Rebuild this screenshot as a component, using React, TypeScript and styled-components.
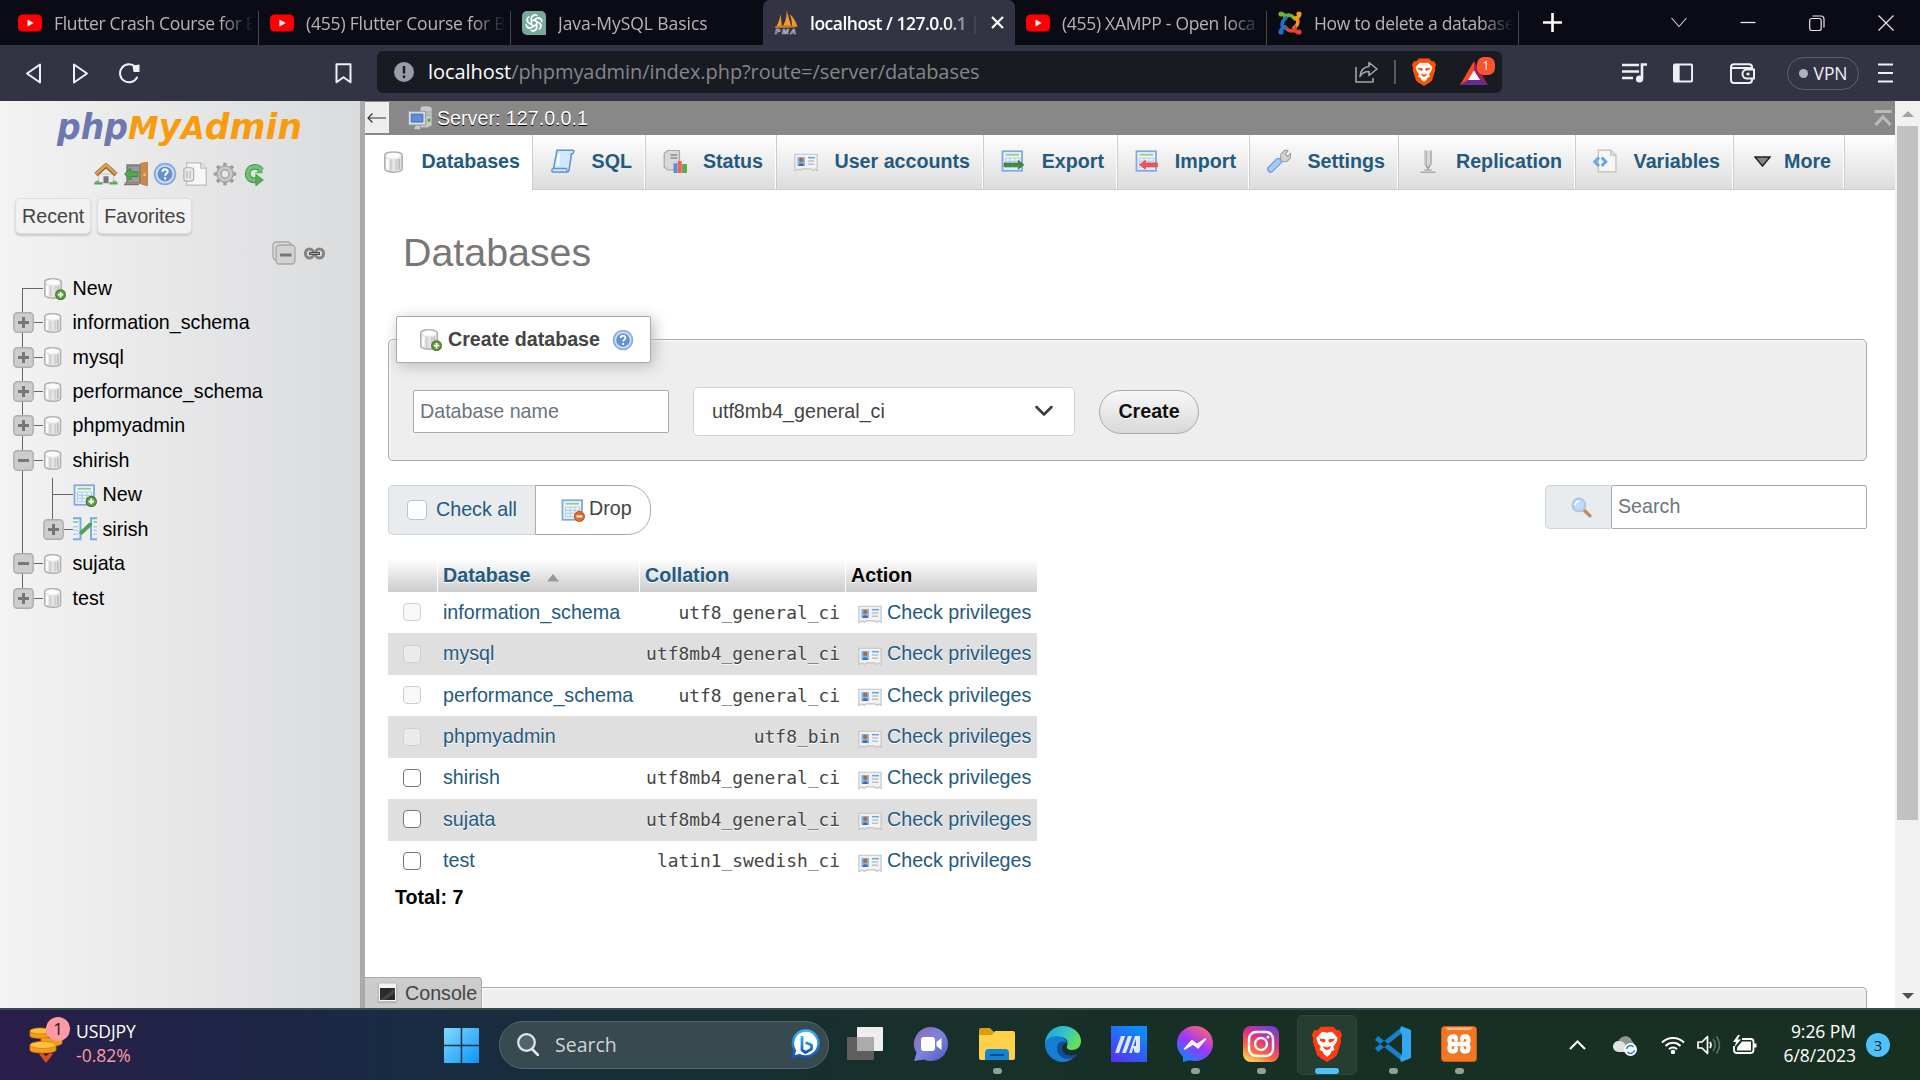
import React from "react";
import styled, { createGlobalStyle, css } from "styled-components";

const GlobalStyle = createGlobalStyle`
  *, *::before, *::after { box-sizing: border-box; }
  html, body { margin: 0; padding: 0; background: #fff; }
  body { font-family: "Liberation Sans", Arial, sans-serif; font-size: 19.68px; color: #444; overflow: hidden; }
  svg { display: block; flex: none; }
`;

const ui = css`
  font-family: "Open Sans", "Noto Sans", sans-serif;
`;

const Screen = styled.div`
  width: 1920px;
  height: 1080px;
  display: flex;
  flex-direction: column;
  overflow: hidden;
`;

/* ---------- browser chrome ---------- */

const TabStrip = styled.div`
  ${ui}
  height: 45px;
  flex: none;
  display: flex;
  padding-left: 7px;
  background: #0b0b15;
`;

const BrowserTab = styled.div<{ $active?: boolean; $line?: boolean }>`
  width: 252px;
  height: 45px;
  flex: none;
  display: flex;
  align-items: center;
  gap: 12px;
  padding: 0 5px 0 11px;
  background: ${(p) =>
    p.$active ? "#323443" : p.$line ? "linear-gradient(#45454c, #45454c) right bottom / 1px 34px no-repeat" : "none"};
  border-radius: ${(p) => (p.$active ? "7px 7px 0 0" : "0")};
`;

const TabTitle = styled.div<{ $active?: boolean; $ls?: number }>`
  flex: 1;
  overflow: hidden;
  white-space: nowrap;
  font-size: 17.5px;
  line-height: 28px;
  letter-spacing: ${(p) => p.$ls ?? -0.3}px;
  font-weight: ${(p) => (p.$active ? 600 : 400)};
  color: ${(p) => (p.$active ? "#fff" : "#b4b4b8")};
  mask-image: linear-gradient(to right, #000 calc(100% - 34px), transparent);
`;

const WindowButtons = styled.div`
  flex: 1;
  display: flex;
  align-items: center;
  justify-content: flex-end;
  padding-right: 26px;
  gap: 53px;
`;

const NewTab = styled.div`
  display: flex;
  align-items: center;
  padding-left: 24px;
`;

const Toolbar = styled.div`
  ${ui}
  height: 56px;
  flex: none;
  display: flex;
  align-items: center;
  background: #323443;
  padding-left: 25px;
`;

const NavGroup = styled.div`
  width: 310px;
  display: flex;
  align-items: center;
  gap: 30px;
`;

const Bookmark = styled.div`
  width: 42px;
`;

const UrlBar = styled.div`
  width: 1125px;
  height: 42px;
  margin-top: -2px;
  display: flex;
  align-items: center;
  padding: 0 6px 0 17px;
  background: #191b22;
  border-radius: 6px;
`;

const UrlText = styled.div`
  flex: 1;
  padding-left: 14px;
  font-size: 20px;
  line-height: 28px;
  letter-spacing: -0.07px;
  color: #85868a;
  white-space: nowrap;
  b { font-weight: 400; color: #fff; }
`;

const UrlActions = styled.div`
  display: flex;
  align-items: center;
`;

const Divider = styled.div`
  width: 2px;
  height: 24px;
  margin: 0 16px 0 16px;
  background: #585a60;
`;

const Rewards = styled.div`
  position: relative;
  margin-left: 24px;
  width: 36px;
  height: 30px;
  padding-top: 4px;
`;

const RewardsBadge = styled.span`
  position: absolute;
  left: 17px;
  top: 0;
  width: 18px;
  height: 18px;
  border-radius: 7px;
  background: #fb542b;
  color: #fff;
  font-size: 12px;
  line-height: 18px;
  text-align: center;
`;

const ToolbarRight = styled.div`
  flex: 1;
  display: flex;
  align-items: center;
  padding: 0 26px 0 120px;
`;

const Vpn = styled.div`
  width: 72px;
  height: 33px;
  margin: 0 19px 0 32px;
  display: flex;
  align-items: center;
  justify-content: center;
  gap: 6px;
  border: 1px solid #5d6078;
  border-radius: 17px;
  color: #f0f0f4;
  font-size: 17.5px;
  letter-spacing: -0.1px;
  &::before { content: ""; width: 9px; height: 9px; border-radius: 50%; background: #aeb1c2; }
`;

/* ---------- page ---------- */

const Page = styled.div`
  height: 907px;
  flex: none;
  display: flex;
  background: #fff;
`;

const Sidebar = styled.aside`
  width: 365px;
  border-right: 5px solid #aaa;
  background: linear-gradient(to right, #f3f3f3, #dadbdd);
  color: #000;
`;

const LogoRow = styled.div`
  padding: 5px 0 0 54px;
  height: 61px;
`;

const ShortcutRow = styled.div`
  display: flex;
  gap: 5.7px;
  height: 36px;
  padding-left: 94px;
`;

const NavButtons = styled.div`
  display: flex;
  gap: 6px;
  padding-left: 15px;
  height: 43px;
`;

const NavButton = styled.div`
  height: 36px;
  padding: 0 6px;
  line-height: 34px;
  border: 1px solid #ddd;
  border-radius: 5px;
  background: #f2f2f2;
  box-shadow: 0 2px 2px #ccc;
  color: #444;
`;

const TreeTools = styled.div`
  display: flex;
  align-items: center;
  gap: 8px;
  padding-left: 272px;
  height: 24px;
`;

const Tree = styled.div`
  padding: 6px 0 0 13px;
`;

const TreeRow = styled.div`
  height: 34.45px;
  display: flex;
  align-items: center;
  white-space: nowrap;
`;

const Gutter = styled.div<{ $top?: string; $bottom?: string }>`
  width: 30px;
  height: 34.45px;
  flex: none;
  display: flex;
  align-items: center;
  background:
    linear-gradient(#666, #666) 9px ${(p) => p.$top ?? "0"} / 1px ${(p) => p.$bottom ?? "100%"} no-repeat;
`;

const Dash = styled.span<{ $w: number }>`
  height: 1px;
  width: ${(p) => p.$w}px;
  margin-left: auto;
  background: #666;
`;

const NodeIcon = styled.span`
  width: 29.500px;
  flex: none;
`;

const Main = styled.main`
  width: 1530px;
  display: flex;
  flex-direction: column;
`;

const ServerBar = styled.div`
  height: 34px;
  flex: none;
  display: flex;
  align-items: center;
  background: #888;
  color: #fff;
  text-shadow: 0 1px 0 #000;
  padding-right: 3px;
`;

const BackBox = styled.div`
  width: 24px;
  height: 31px;
  margin: 1px 19px 0 0;
  display: flex;
  align-items: center;
  justify-content: center;
  align-self: flex-start;
  background: #eee;
`;

const ServerName = styled.div`
  flex: 1;
  padding: 0 0 1px 5px;
  line-height: 24px;
`;

const Menu = styled.nav`
  height: 55px;
  flex: none;
  display: flex;
  background: linear-gradient(#fff, #dcdcdc);
  border-bottom: 1px solid #ccc;
`;

const MenuTab = styled.div<{ $w: number; $active?: boolean; $pad?: number }>`
  width: ${(p) => p.$w}px;
  height: ${(p) => (p.$active ? 55 : 54)}px;
  flex: none;
  display: flex;
  align-items: center;
  justify-content: space-between;
  padding: 0 12px 2px ${(p) => p.$pad ?? 18}px;
  font-weight: 700;
  color: #235a81;
  white-space: nowrap;
  background: ${(p) => (p.$active ? "#fff" : "none")};
  border-right: 1px solid ${(p) => (p.$active ? "#ccc" : "#fff")};
  box-shadow: ${(p) => (p.$active ? "none" : "1px 0 0 #ccc")};
`;

const Content = styled.div`
  flex: 1;
  min-height: 0;
  padding: 0 28px 0 23px;
  display: flex;
  flex-direction: column;
`;

const Title = styled.h2`
  margin: 0;
  padding: 37px 0 0 15px;
  height: 126px;
  font-size: 39.36px;
  line-height: 50px;
  font-weight: 400;
  color: #777;
`;

const panel = css`
  border: 1px solid #aaa;
  background: #eee;
  box-shadow: 1px 1px 2px #fff inset;
`;

const CreateBox = styled.section`
  ${panel}
  flex: none;
  height: 122px;
  margin-top: 23px;
  border-radius: 5px;
`;

const Legend = styled.div`
  width: 255px;
  height: 47px;
  margin: -24px 0 0 7px;
  padding: 0 16px 0 22px;
  display: flex;
  align-items: center;
  font-weight: 700;
  color: #444;
  background: #fff;
  border: 1px solid #aaa;
  border-radius: 2px;
  box-shadow: 3px 3px 15px #bbb;
  span { padding: 0 0 1px 6px; flex: 1; }
`;

const CreateForm = styled.div`
  display: flex;
  align-items: center;
  padding: 24px 0 0 24px;
`;

const Field = styled.div<{ $h: number }>`
  width: 256px;
  height: ${(p) => p.$h}px;
  display: flex;
  align-items: center;
  padding: 0 6px 1px;
  border: 1px solid #aaa;
  border-radius: 2px;
  background: #fff;
  color: #6c757d;
`;

const Select = styled.div`
  width: 382px;
  height: 49px;
  margin: 0 24px;
  padding: 0 21px 1px 18px;
  display: flex;
  align-items: center;
  justify-content: space-between;
  border: 1px solid #ced4da;
  border-radius: 5px;
  background: #fff;
`;

const CreateButton = styled.div`
  width: 100px;
  height: 44px;
  line-height: 41px;
  text-align: center;
  font-weight: 700;
  color: #111;
  text-shadow: 0 1px 0 #fff;
  border: 1px solid #aaa;
  border-radius: 22px;
  background: linear-gradient(#f8f8f8, #d8d8d8);
`;

const ActionRow = styled.div`
  flex: none;
  display: flex;
  align-items: flex-start;
  height: 50px;
  margin-top: 24px;
`;

const CheckAll = styled.div`
  width: 147px;
  height: 50px;
  display: flex;
  align-items: center;
  gap: 9px;
  padding-left: 18px;
  border: 1px solid #ced4da;
  border-right: 0;
  border-radius: 5px 0 0 5px;
  background: #e9ecef;
  color: #235a81;
  label { padding-bottom: 2px; }
`;

const Check = styled.span<{ $size: number; $edge: string; $bg?: string }>`
  display: block;
  width: ${(p) => p.$size}px;
  height: ${(p) => p.$size}px;
  border: 1px solid ${(p) => p.$edge};
  border-radius: 4px;
  background: ${(p) => p.$bg ?? "#fff"};
`;

const DropButton = styled.div`
  width: 116px;
  height: 50px;
  display: flex;
  align-items: center;
  gap: 4px;
  padding: 0 0 3px 25px;
  border: 1px solid #aaa;
  border-radius: 0 23px 23px 0;
  background: #fff;
  color: #444;
  margin-right: auto;
  svg { margin-top: 3px; }
`;

const SearchAddon = styled.div`
  width: 66px;
  height: 44px;
  display: flex;
  align-items: center;
  justify-content: center;
  padding-left: 5px;
  border: 1px solid #ced4da;
  border-right: 0;
  border-radius: 5px 0 0 5px;
  background: #e9ecef;
`;

const Table = styled.div`
  flex: none;
  width: 649px;
  margin-top: 24px;
`;

const rowGrid = css`
  display: grid;
  grid-template-columns: 49px 201px 205px 191px;
  column-gap: 1px;
`;

const HeadRow = styled.div`
  ${rowGrid}
  height: 33px;
`;

const HeadCell = styled.div<{ $dark?: boolean }>`
  display: flex;
  align-items: center;
  gap: 17px;
  padding: 0 5px 1px;
  background: linear-gradient(#fff, #ccc);
  color: ${(p) => (p.$dark ? "#000" : "#235a81")};
  font-weight: 700;
  text-shadow: 0 1px 0 #fff;
`;

const Row = styled.div<{ $odd: boolean }>`
  ${rowGrid}
  height: 41.45px;
  align-items: center;
  padding-bottom: 1px;
  background: ${(p) => (p.$odd ? "#dfdfdf" : "#fff")};
  text-shadow: 0 1px 0 #fff;
  color: #235a81;
  white-space: nowrap;
`;

const CheckCell = styled.div`
  padding: 0 0 0 15px;
`;

const NameCell = styled.div`
  padding-left: 5px;
`;

const CollationCell = styled.div`
  padding-right: 5px;
  text-align: right;
  font-family: "DejaVu Sans Mono", monospace;
  font-size: 17.9px;
  color: #444;
`;

const ActionCell = styled.div`
  display: flex;
  align-items: center;
  gap: 5px;
  padding-left: 12px;
  svg { margin-top: 2px; }
`;

const Total = styled.div`
  padding: 3px 0 0 7px;
  line-height: 24px;
  font-weight: 700;
  color: #000;
  flex: 1;
`;

const ConsoleRow = styled.div`
  flex: none;
  display: flex;
  align-items: flex-end;
  height: 31px;
  margin-left: -23px;
`;

const ConsoleTab = styled.div`
  width: 117px;
  height: 31px;
  display: flex;
  align-items: center;
  gap: 7px;
  padding-left: 12px;
  border: 1px solid #aaa;
  border-width: 1px 1px 0 0;
  border-radius: 0 4px 0 0;
  background: #ccc;
`;

const ConsoleEdge = styled.div`
  ${panel}
  flex: 1;
  height: 21px;
  border-width: 1px 1px 0 0;
  border-radius: 0 5px 0 0;
`;

const Scrollbar = styled.div`
  width: 25px;
  display: flex;
  flex-direction: column;
  align-items: center;
  background: #f1f1f1;
  padding: 10px 0 9px;
`;

const Thumb = styled.div`
  width: 21px;
  height: 694px;
  margin: 9px 0 auto;
  background: #c1c1c1;
`;

/* ---------- taskbar ---------- */

const Taskbar = styled.div`
  ${ui}
  height: 72px;
  flex: none;
  display: flex;
  align-items: center;
  border-top: 2px solid #3a4a4c;
  background: linear-gradient(to right, #2a1e4a 0, #202346 190px, #182b43 400px, #162f36 620px, #17302b 900px, #173024 1250px, #173022 1920px);
  color: #fff;
`;

const Widget = styled.div`
  position: relative;
  width: 444px;
  height: 70px;
  display: flex;
  align-items: center;
  padding: 0 0 0 29px;
  gap: 13px;
`;

const WidgetBadge = styled.span`
  position: absolute;
  left: 46px;
  top: 7px;
  width: 24px;
  height: 24px;
  border-radius: 50%;
  background: #ff99a4;
  color: #1b1b1b;
  font-size: 17px;
  line-height: 23px;
  text-align: center;
`;

const WidgetText = styled.div`
  font-size: 17.5px;
  line-height: 24px;
  letter-spacing: -0.05px;
  padding-bottom: 4px;
  span { display: block; color: #ff99a4; letter-spacing: 0; }
`;

const SearchPill = styled.div`
  width: 330px;
  height: 48px;
  margin: 0 0 0 20px;
  padding: 0 8px 2px 17px;
  display: flex;
  align-items: center;
  border-radius: 24px;
  border: 1px solid #53666a;
  background: #364a4f;
  font-size: 19.5px;
  color: #d0d5d6;
  span { flex: 1; padding-left: 16px; letter-spacing: 0; }
`;

const Apps = styled.div`
  display: flex;
  margin-left: 6px;
  gap: 6px;
`;

const AppSlot = styled.div<{ $state?: "open" | "active" }>`
  width: 60px;
  height: 60px;
  display: flex;
  flex-direction: column;
  align-items: center;
  padding-top: ${(p) => (p.$state === "active" ? 10 : 11)}px;
  border-radius: 6px;
  background: ${(p) => (p.$state === "active" ? "#263d31" : "none")};
  border: ${(p) => (p.$state === "active" ? "1px solid #30463a" : "0")};
  &::after {
    content: "";
    display: ${(p) => (p.$state ? "block" : "none")};
    margin-top: 6px;
    width: ${(p) => (p.$state === "active" ? 24 : 9)}px;
    height: 6px;
    border-radius: 3px;
    background: ${(p) => (p.$state === "active" ? "#4cc2ff" : "#939f99")};
  }
`;

const Tray = styled.div`
  flex: 1;
  display: flex;
  align-items: center;
  justify-content: flex-end;
  padding-right: 30px;
`;

const TrayIcons = styled.div`
  display: flex;
  align-items: center;
  gap: 12px;
`;

const Clock = styled.div`
  width: 99px;
  text-align: right;
  font-size: 17.5px;
  line-height: 24px;
  letter-spacing: -0.05px;
  padding-bottom: 4px;
  white-space: nowrap;
`;

const Notice = styled.div`
  width: 24px;
  height: 24px;
  margin-left: 10px;
  border-radius: 50%;
  background: #4cc2ff;
  color: #10222c;
  font-size: 15px;
  line-height: 24px;
  text-align: center;
`;

/* ---------- icons ---------- */

type P = { s?: number; w?: number; h?: number };

const YouTube = () => (
  <svg width="24" height="24" viewBox="0 0 24 24">
    <rect x="0" y="3.5" width="24" height="17" rx="4.5" fill="#f00" />
    <path d="M9.5 8.5v7l6.2-3.5z" fill="#fff" />
  </svg>
);
const ChatGpt = () => (
  <svg width="24" height="24" viewBox="0 0 24 24">
    <path d="M5 0h14a5 5 0 0 1 5 5v19H5a5 5 0 0 1-5-5V5a5 5 0 0 1 5-5z" fill="#75a99c" />
    <g fill="none" stroke="#fff" strokeWidth="1.4" strokeLinejoin="round">
      {[0, 60, 120, 180, 240, 300].map((a) => (
        <path key={a} transform={`rotate(${a} 12 12)`} d="M9.4 13.5V7.2A3.3 3.3 0 0 1 15.2 5M9.4 10.5l4.8-2.8a3.3 3.3 0 0 1 4.5 1.2" />
      ))}
    </g>
  </svg>
);
const PmaFav = () => (
  <svg width="24" height="26" viewBox="0 0 24 26">
    <path d="M2 17C5 12 6 8 6.500 4L8 17zM8.500 17C12 11 13 5 12.500 0l5 17zM18 16c0-5-1-9-2.500-12 4 3 6 7 8 13z" fill="#f39a2d" />
    <path d="M1 16.500c7-1.500 14-1.500 21-.5l-1 1.500-20 .5z" fill="#c77a25" />
    <text x="1" y="23.500" fontSize="8" fontWeight="700" fontStyle="italic" fontFamily="Liberation Sans" textLength="21" fill="#3f4170" stroke="#c9cbe6" strokeWidth=".5">PMA</text>
  </svg>
);
const Joomla = () => (
  <svg width="24" height="24" viewBox="0 0 24 24" fill="none" strokeWidth="3.600" strokeLinecap="round">
    <path d="M3 3c3.500-.5 3.500 1 4 3 1.500-2.500 6-2.500 8 0l2 2" stroke="#6bb42b" />
    <path d="M21 3c.5 3.500-1 3.500-3 4 2.500 1.500 2.500 6 0 8l-2 2" stroke="#f39a21" />
    <path d="M21 21c-3.500.5-3.500-1-4-3-1.500 2.500-6 2.500-8 0l-2-2" stroke="#e8412c" />
    <path d="M3 21c-.5-3.500 1-3.500 3-4-2.500-1.500-2.500-6 0-8l2-2" stroke="#1c72c4" />
    <circle cx="3" cy="3" r="1.600" stroke="#6bb42b" strokeWidth="2" /><circle cx="21" cy="3" r="1.600" stroke="#f39a21" strokeWidth="2" />
    <circle cx="21" cy="21" r="1.600" stroke="#e8412c" strokeWidth="2" /><circle cx="3" cy="21" r="1.600" stroke="#1c72c4" strokeWidth="2" />
  </svg>
);

const BraveLion = ({ s = 28, w = 24, c = "#ff5000" }: P & { c?: string }) => (
  <svg width={w} height={s} viewBox="0 0 24 28" preserveAspectRatio="none">
    <path d="M7 .5h10l3 3 2-.5L24 7l-1 3 .3 2-3.300 10.500L17 25l-5 3-5-3-3-2.500L.7 12 1 10 0 7l2-4 2 .5z" fill={c} />
    <path d="M8 4.500l4 .8 4-.8 4.500 4.800-1.200 4-2.300 2.700 1 2.500-2.500 1.200-1 2.300-2.500 2-2.500-2-1-2.300L6 18.500l1-2.500-2.300-2.700-1.200-4z" fill="#fff" />
    <path d="M6 9.700l4.500.6.500 1.400-1.500 1.300-3-1.500zM18 9.700l-4.500.6-.5 1.400 1.500 1.300 3-1.500zM8.500 15.500l3.500 1.300 3.500-1.300-1.700 2.500-1.800.7-1.800-.7z" fill={c} />
  </svg>
);

const Ico = ({ children, s = 24 }: { children: React.ReactNode; s?: number }) => (
  <svg width={s} height={s} viewBox="0 0 16 16">{children}</svg>
);

const Cylinder = () => (
  <>
    <path d="M1.200 3.500c0-3 11.600-3 11.600 0v9c0 3-11.600 3-11.600 0z" fill="#e4e4e4" stroke="#b0b0b0" strokeWidth="1" />
    <path d="M3 6v7" stroke="#fff" strokeWidth="1.600" /><path d="M5.300 6.300v7.200M9 6.300v7.200" stroke="#cfcfcf" strokeWidth="1.400" />
    <path d="M10.800 6v7" stroke="#bdbdbd" strokeWidth="1.200" />
    <ellipse cx="7" cy="3.700" rx="4.900" ry="1.900" fill="#fbfbfb" />
  </>
);
const PlusDot = () => (
  <>
    <circle cx="12.200" cy="12.300" r="3.400" fill="#5d9c3c" stroke="#41782a" strokeWidth=".7" />
    <path d="M12.200 10.400v3.800M10.300 12.300h3.800" stroke="#fff" strokeWidth="1.300" />
  </>
);
const Db = ({ s = 22 }: P) => <Ico s={s}><Cylinder /></Ico>;
const DbNew = ({ s = 23 }: P) => <Ico s={s}><Cylinder /><PlusDot /></Ico>;
const Sheet = () => (
  <>
    <rect x="1" y="1.500" width="13" height="13" fill="#eef5fd" stroke="#7fa8de" strokeWidth="1.200" />
    <path d="M3 3.800h9" stroke="#8fcf7c" strokeWidth="1.200" />
    <path d="M3 6h9.500v6.500H3zM3 8.200h9.500M3 10.300h9.500M6 6v6.500M9.200 6v6.500" fill="none" stroke="#b3cdeb" strokeWidth=".8" />
  </>
);
const TableNew = () => <Ico><Sheet /><PlusDot /></Ico>;
const TableDrop = () => (
  <Ico><Sheet /><circle cx="12.300" cy="12.300" r="3.400" fill="#e7692b" stroke="#c14a12" strokeWidth=".6" /><path d="M10.400 12.300h3.800" stroke="#fff" strokeWidth="1.300" /></Ico>
);
const ExportIcon = () => (
  <Ico><Sheet /><path d="M2 9.300h9.500V7.500l3.800 3-3.800 3v-1.700H2z" fill="#3f8f38" stroke="#2c6b2c" strokeWidth=".4" /></Ico>
);
const ImportIcon = () => (
  <Ico><Sheet /><path d="M15 9.300H7V7.500l-4 3 4 3v-1.700h8z" fill="#f0555c" stroke="#d33" strokeWidth=".4" /></Ico>
);
const TableRel = () => (
  <Ico>
    <path d="M0 .8h5v14H0M16 .8h-4v14h4" fill="#e9f2fc" stroke="#7fa8de" strokeWidth="1.300" />
    <path d="M0 3.300h3.500M13.500 3.300H16" stroke="#8fcf7c" strokeWidth="1.200" />
    <path d="M0 6.500h3.500M0 9h3.500M0 11.500h3.500M13.500 6.500H16M13.500 9H16M13.500 11.500H16" stroke="#b3cdeb" strokeWidth=".9" />
    <path d="M5.500 10.500l6-5.500" stroke="#51a351" strokeWidth="2.600" strokeLinecap="round" />
  </Ico>
);
const SqlIcon = () => (
  <Ico>
    <path d="M4 .8h10.500c1.200 0 1.200 2.400-.8 2.400L12 14.200c-.3 1.200-1 1.200-1.500 1.200H1.500c-1.300 0-1.300-2.400.2-2.400z" fill="#d2e7fb" stroke="#5f93cf" strokeWidth="1" />
    <path d="M13 3.200h1.500M1.700 13h8.500c.5 0 .5 1.800.4 2.400" fill="none" stroke="#5f93cf" strokeWidth=".9" />
    <path d="M5.500 3l-1.200 8" stroke="#fff" strokeWidth="1.500" />
  </Ico>
);
const StatusIcon = () => (
  <Ico>
    <path d="M3 1h8v13H3L.8 12V3z" fill="#d9d9d9" stroke="#a6a6a6" strokeWidth=".8" />
    <path d="M5 4h4.500M5 6h4.500" stroke="#8d8d8d" strokeWidth=".9" />
    <path d="M7 9.500h2.600V16H7z" fill="#5a8de0" /><path d="M9.800 8h2.700v8H9.800z" fill="#f0605a" /><path d="M12.700 10H16v6h-3.300z" fill="#5aad4c" />
  </Ico>
);
const Privileges = () => (
  <Ico>
    <path d="M.6 3.500h14.800v10.800l-1.500-1-1.500 1-1-1h-6l-1.200 1-1.400-1-2.200 1z" fill="#f2f2f2" stroke="#c4c4c4" strokeWidth=".8" />
    <rect x="2.300" y="5.300" width="5" height="6" fill="#7db4ee" />
    <circle cx="4.800" cy="7.300" r="1.400" fill="#b06a2c" /><path d="M3 11.300c0-2.500 3.600-2.500 3.600 0z" fill="#3f6dab" />
    <path d="M9.300 5.800H14" stroke="#67a3e0" /><path d="M9.300 8h4.200M9.300 10.200h4.200" stroke="#b9c2cc" />
  </Ico>
);
const Wrench = () => (
  <Ico>
    <path d="M9 7.500l.3-4L12 .8l2 .2-1.700 2.600 1.500 1.300L15.700 3v3l-2.500 2.400-3 .3z" fill="#d2d2d2" stroke="#999" strokeWidth=".7" />
    <path d="M2.500 13.400L7.500 8.300" stroke="#6f9ce2" strokeWidth="4.800" strokeLinecap="round" />
    <path d="M2.500 13.400L7.500 8.300" stroke="#a8c8f4" strokeWidth="3.200" strokeLinecap="round" />
  </Ico>
);
const Replication = () => (
  <Ico>
    <path d="M6.500 1v9.500M9.500 1v9.500" stroke="#b3b3b3" strokeWidth="2.200" /><path d="M6 1v9M9 1v9" stroke="#ddd" strokeWidth=".7" />
    <path d="M6.500 10.500L8 13l1.500-2.500" stroke="#999" fill="none" /><path d="M3 15.500h10M5.500 14h5" stroke="#aaa" strokeWidth="1.100" />
  </Ico>
);
const Variables = () => (
  <Ico>
    <path d="M3.500.8h8.300l3.500 3.400v11H3.500z" fill="#f6f6f6" stroke="#bdbdbd" strokeWidth=".8" />
    <path d="M11.800.8v3.400h3.500" fill="#e2e2e2" stroke="#bdbdbd" strokeWidth=".7" />
    <path d="M4 5.700L1.300 8.500 4 11.300M5.800 5.700l2.700 2.800-2.700 2.800" fill="none" stroke="#65a5ea" strokeWidth="2" />
  </Ico>
);
const ServerIcon = () => (
  <Ico>
    <path d="M9 0h5l2 1v12l-3 1.500H8V2z" fill="#c9c9c9" stroke="#8a8a8a" strokeWidth=".5" />
    <path d="M12 4h3M12 6h3" stroke="#999" strokeWidth=".6" /><path d="M13 8.500h2v2h-2z" fill="#4fae4f" />
    <path d="M.3 3.500h11.500v9.200H.3z" fill="#d7dade" stroke="#8e9297" strokeWidth=".6" /><path d="M2.200 5.400h7.700v5.300H2.200z" fill="#5c8fd8" stroke="#3d6cb3" strokeWidth=".6" />
    <path d="M4 15.500h4.500L7.500 13h-2.500z" fill="#c7c7c7" />
  </Ico>
);
const Help = ({ s = 22 }: P) => (
  <Ico s={s}>
    <circle cx="8" cy="8" r="7" fill="#a9c4e8" stroke="#86aadb" strokeWidth="1" />
    <circle cx="8" cy="8" r="5.400" fill="#6591cc" stroke="#dbe8f8" strokeWidth=".8" />
    <path d="M6.300 6.600c0-2.300 3.500-2.200 3.500-.2 0 1.300-1.700 1.300-1.700 2.700M8.100 10.200v1.400" fill="none" stroke="#fff" strokeWidth="1.300" />
  </Ico>
);
const Home = () => (
  <Ico>
    <path d="M3 8h10v6H3z" fill="#ececec" stroke="#b9b9b9" strokeWidth=".5" /><path d="M6.300 9.500h3.400V14H6.300z" fill="#777" />
    <path d="M.2 13.500h5.500V15H.2zM10.300 13.500h5.500V15h-5.500z" fill="#58a55c" /><path d="M1 12.500h2.500V14H1zM12.500 12.500H15V14h-2.500z" fill="#6bb86b" />
    <path d="M1.300 8.300L8 2.300l6.700 6" fill="none" stroke="#9b5f22" strokeWidth="3" strokeLinejoin="round" /><path d="M1.300 8L8 2l6.700 6" fill="none" stroke="#d8a05c" strokeWidth="1.900" />
  </Ico>
);
const Exit = () => (
  <Ico>
    <path d="M1.500 1.500H11v13H.5v-1h1z" fill="#808080" /><path d="M3 3h7v10.500H3z" fill="#9c9c9c" />
    <path d="M11 1l4.800-1v16L11 14.500z" fill="#c98a4b" stroke="#a2662a" strokeWidth=".4" /><circle cx="13.700" cy="8.500" r=".8" fill="#f8d84a" />
    <path d="M.3 8l4.200-3.800v2.300h4.700v3.200H4.500v2.300z" fill="#4faa4c" stroke="#2f7f2f" strokeWidth=".5" /><path d="M0 15h10" stroke="#8c7256" />
  </Ico>
);
const Docs = () => (
  <Ico>
    <path d="M2.500.6h9.200l3.800 3.600v11.200H2.500z" fill="#f7f7f7" stroke="#bdbdbd" strokeWidth=".8" /><path d="M11.700.6v3.600h3.800" fill="#e2e2e2" stroke="#bdbdbd" strokeWidth=".7" />
    <path d="M.6 5c0-1.800 6.500-1.800 6.500 0v6.500c0 1.800-6.500 1.800-6.500 0z" fill="#e8e8e8" stroke="#aeaeae" strokeWidth=".8" /><path d="M2.600 6v5M4.800 6v5" stroke="#c0c0c0" />
  </Ico>
);
const Gear = () => (
  <Ico>
    {[0, 45, 90, 135].map((a) => <path key={a} transform={`rotate(${a} 8 8)`} d="M8 .5v15" stroke="#9c9c9c" strokeWidth="2.300" />)}
    <circle cx="8" cy="8" r="5.400" fill="#c9c9c9" stroke="#a3a3a3" strokeWidth=".8" /><circle cx="8" cy="8" r="2.700" fill="#e6e7e8" stroke="#999" strokeWidth=".8" />
  </Ico>
);
const Refresh = () => (
  <Ico>
    <path d="M12.800 5.500C11 2 3.800 2.500 3.800 8c0 3.300 3 4.600 5.700 4.200" fill="none" stroke="#3f9447" strokeWidth="3.800" />
    <path d="M8.300 7.500h5.400V4z" fill="#62b766" />
    <path d="M12.800 5.500C11 2 3.800 2.500 3.800 8c0 3.300 3 4.600 5.700 4.200" fill="none" stroke="#71c274" strokeWidth="2.400" />
    <path d="M9.200 8.200l5 3.800-5 4z" fill="#57a95b" stroke="#3f9447" strokeWidth=".5" />
  </Ico>
);
const Toggle = ({ open }: { open?: boolean }) => (
  <svg width="21" height="21" viewBox="0 0 21 21">
    <rect x=".8" y=".8" width="19.400" height="19.400" rx="3.500" fill="#cdcdcd" stroke="#adadad" strokeWidth="1.400" />
    <path d={open ? "M5 10.500h11" : "M5 10.500h11M10.500 5v11"} stroke="#777" strokeWidth="3" />
  </svg>
);
const CollapseAll = () => (
  <svg width="24" height="24" viewBox="0 0 24 24">
    <rect x="1" y="1" width="18" height="18" rx="3.500" fill="#dcdcdc" stroke="#a6a6a6" strokeWidth="1.300" />
    <rect x="4" y="4" width="19" height="19" rx="3.500" fill="#d2d2d2" stroke="#a6a6a6" strokeWidth="1.300" />
    <path d="M8 14h11.500" stroke="#777" strokeWidth="3" />
  </svg>
);
const Link = () => (
  <svg width="21" height="13" viewBox="0 0 21 13" fill="none">
    <rect x="1.500" y="2" width="8" height="9" rx="4" stroke="#858585" strokeWidth="3" /><rect x="11.500" y="2" width="8" height="9" rx="4" stroke="#858585" strokeWidth="3" />
    <path d="M5 6.500h11" stroke="#4c4c4c" strokeWidth="3" /><path d="M6 6.500h9" stroke="#aaa" strokeWidth="1" />
  </svg>
);
const Magnifier = () => (
  <Ico s={22}>
    <path d="M10 10l4.500 4.500" stroke="#b98a63" strokeWidth="2.400" strokeLinecap="round" />
    <circle cx="6.500" cy="6.500" r="4.600" fill="#bcdcfb" stroke="#b4c6dc" strokeWidth="1.600" />
    <path d="M3.700 6.700a3 3 0 0 1 3-3" stroke="#fff" fill="none" strokeWidth="1.200" />
  </Ico>
);
const Terminal = () => (
  <svg width="21" height="22" viewBox="0 0 21 22">
    <rect x=".5" y=".5" width="20" height="21" rx="2" fill="#b9b9b9" /><rect x="2" y="1.500" width="17" height="17.500" fill="#f4f4f4" />
    <path d="M3 6h15v12H3z" fill="#2b2b2b" /><path d="M3 18L18 6v5L8 18z" fill="#444" />
  </svg>
);
const Pma = () => (
  <svg width="256" height="46" viewBox="0 0 256 46" fontFamily="DejaVu Sans, sans-serif" fontWeight="700" fontStyle="italic" fontSize="36">
    <text x="3" y="33" textLength="71" lengthAdjust="spacingAndGlyphs" fill="#6c78af">php</text>
    <text x="74" y="33" textLength="174" lengthAdjust="spacingAndGlyphs" fill="#f89c0e"><tspan fontSize="32">M</tspan>y<tspan fontSize="32">A</tspan>dmin</text>
  </svg>
);

/* ---------- data ---------- */

const menu: [string, number, React.ReactNode][] = [
  ["SQL", 112, <SqlIcon />],
  ["Status", 131, <StatusIcon />],
  ["User accounts", 207, <Privileges />],
  ["Export", 134, <ExportIcon />],
  ["Import", 132, <ImportIcon />],
  ["Settings", 149, <Wrench />],
  ["Replication", 177, <Replication />],
  ["Variables", 158, <Variables />],
];

const rows: [string, string, boolean][] = [
  ["information_schema", "utf8_general_ci", false],
  ["mysql", "utf8mb4_general_ci", false],
  ["performance_schema", "utf8_general_ci", false],
  ["phpmyadmin", "utf8_bin", false],
  ["shirish", "utf8mb4_general_ci", true],
  ["sujata", "utf8mb4_general_ci", true],
  ["test", "latin1_swedish_ci", true],
];

const DbNode = ({ name, open, last }: { name: string; open?: boolean; last?: boolean }) => (
  <TreeRow>
    <Gutter $bottom={last ? "50%" : "100%"}><Toggle open={open} /><Dash $w={9} /></Gutter>
    <NodeIcon><Db /></NodeIcon>
    {name}
  </TreeRow>
);

/* ---------- taskbar app icons ---------- */

const A = ({ children }: { children: React.ReactNode }) => <svg width="36" height="36" viewBox="0 0 36 36">{children}</svg>;

const TaskView = () => (
  <A><rect x="0" y="11" width="27" height="23" rx="1" fill="#5e5e5e" /><rect x="10" y="1" width="26" height="24" rx="1" fill="#eee" /><path d="M10 11h17v14H10z" fill="#ababab" /></A>
);
const Chat = () => (
  <A>
    <defs><linearGradient id="chat" x1="0" y1="0" x2="1" y2="1"><stop offset="0" stopColor="#8d6cae" /><stop offset=".5" stopColor="#7b83dd" /><stop offset="1" stopColor="#5059c9" /></linearGradient></defs>
    <path d="M18 1a17 17 0 1 1-7 32.500L1 35l2.500-8A17 17 0 0 1 18 1z" fill="url(#chat)" /><rect x="8" y="11" width="14" height="14" rx="3" fill="#fff" /><path d="M23.500 16l5-4v12l-5-4z" fill="#fff" />
  </A>
);
const Explorer = () => (
  <A>
    <path d="M0 4q0-2 2-2h9l4 4v8H0z" fill="#dc9c12" /><path d="M0 9h13l3-4h18q2 0 2 2v25q0 2-2 2H2q-2 0-2-2z" fill="#ffd04a" />
    <path d="M6 34V27q0-4 4-4h16q4 0 4 4v7z" fill="#1683d2" /><path d="M11 29h14" stroke="#0a4e8c" strokeWidth="2" />
  </A>
);
const Edge = () => (
  <A>
    <defs>
      <linearGradient id="edgeA" x1="0" y1="0" x2="1" y2=".4"><stop offset="0" stopColor="#1c9de0" /><stop offset=".6" stopColor="#35c6c4" /><stop offset="1" stopColor="#65e05c" /></linearGradient>
    </defs>
    <path d="M0 18C0 8 8 0 18 0s18 7 18 15c0 6-4 9-9 9-4 0-6-2-5-4 2-5-1-9-8-9C7 11 2 14 0 18z" fill="url(#edgeA)" />
    <path d="M0 18c1-5 6-8 12-8 5 0 9 3 10 7-6-3-10 2-9 7 1 7 10 9 18 5-3 4-8 7-13 7C8 36 0 28 0 18z" fill="#157fd4" />
    <path d="M13 18c-3 8 2 15 10 15 4 0 7-2 9-4l1-1c-8 3-15 1-16-5 0-3 1-5 4-6-3-2-6-2-8 1z" fill="#124f98" />
  </A>
);
const MAudio = () => (
  <A>
    <defs><linearGradient id="ma" x1="0" y1="1" x2=".6" y2="0"><stop offset="0" stopColor="#5b2cf5" /><stop offset="1" stopColor="#0c8cfb" /></linearGradient></defs>
    <path d="M0 0h36v36H0z" fill="url(#ma)" />
    <path d="M4 27l6-17h4L8 27zM11 27l6-17h4l-6 17zM18 27l6-17h5v14a3 3 0 0 1-6 0v-1.500h-1L21 27z" fill="#dfe6ff" /><path d="M25 13v7h-2.500z" fill="#2b5cf8" />
  </A>
);
const Messenger = () => (
  <A>
    <defs><linearGradient id="msg" x1=".2" y1="1" x2=".8" y2="0"><stop offset="0" stopColor="#0a8bff" /><stop offset=".5" stopColor="#a033ff" /><stop offset="1" stopColor="#ff6968" /></linearGradient></defs>
    <path d="M18 0c10 0 18 7.500 18 17.500S28 35 18 35c-2 0-4-.3-5.500-.8L6 36v-5.500C2 27 0 23 0 17.500 0 7.500 8 0 18 0z" fill="url(#msg)" />
    <path d="M7.500 23l7.500-8.500 5 4L28.500 13 21 22l-5-4z" fill="#fff" stroke="#fff" strokeWidth="1.500" strokeLinejoin="round" />
  </A>
);
const Instagram = () => (
  <A>
    <defs><linearGradient id="ig" x1=".2" y1="1" x2=".7" y2="0"><stop offset="0" stopColor="#ffd65c" /><stop offset=".3" stopColor="#fd6a3c" /><stop offset=".65" stopColor="#dc2f86" /><stop offset="1" stopColor="#7a3fd0" /></linearGradient></defs>
    <rect width="36" height="36" rx="8" fill="url(#ig)" /><rect x="6" y="6" width="24" height="24" rx="7" fill="none" stroke="#fff" strokeWidth="2.400" /><circle cx="18" cy="18" r="6" fill="none" stroke="#fff" strokeWidth="2.400" /><circle cx="25" cy="11" r="1.600" fill="#fff" />
  </A>
);
const VsCode = () => (
  <A>
    <path d="M0 14l3-4 24 19v6zM0 22l3 4L27 7V1z" fill="#1580cc" />
    <path d="M26 0l10 4v28l-10 4-1-4 2-4V9l-2-4z" fill="#34a7f2" />
  </A>
);
const Xampp = () => (
  <A>
    <rect x=".5" y=".5" width="35" height="35" rx="3" fill="#f37623" stroke="#c95d16" /><path d="M4 1.500h28L29 4H7z" fill="#ffb98a" />
    <path d="M15 13.500q0-3-3-3-3.500 0-3.500 3.700 0 2.600 2.500 3.800-2.500 1.200-2.500 3.800 0 3.700 3.500 3.700 3 0 3-3M21 13.500q0-3 3-3 3.500 0 3.500 3.700 0 2.600-2.500 3.800 2.500 1.200 2.500 3.800 0 3.700-3.500 3.700-3 0-3-3M11 18h14" fill="none" stroke="#fff" strokeWidth="4.300" strokeLinecap="round" strokeLinejoin="round" />
  </A>
);
const Bing = () => (
  <svg width="29" height="30" viewBox="0 0 29 30">
    <defs><linearGradient id="bing" x1="0" y1="0" x2="0" y2="1"><stop offset="0" stopColor="#35b7f3" /><stop offset="1" stopColor="#1556c0" /></linearGradient></defs>
    <path d="M14.500 1.500a13 13 0 1 1-6 24.500L2 28l2-6.500A13 13 0 0 1 14.500 1.500z" fill="#fff" stroke="url(#bing)" strokeWidth="2.500" />
    <path d="M11 7v14l3.500 2.500 6-3.500v-4l-6-2.500" fill="none" stroke="url(#bing)" strokeWidth="2.800" strokeLinejoin="round" />
  </svg>
);

const CloseTab = styled.svg`
  margin-right: 6px;
`;
const PanelIcon = styled.svg`
  margin-left: 25px;
`;
const WalletIcon = styled.svg`
  margin-left: 37px;
`;
const SortArrow = styled.svg`
  margin-top: 6px;
`;
const Chevron = styled.svg`
  margin-right: 15px;
`;
const Cloud = styled.svg`
  margin-right: 12px;
`;

export default function App() {
  return (
    <Screen>
      <GlobalStyle />
      <TabStrip>
        <BrowserTab $line><YouTube /><TabTitle $ls={-0.33}>Flutter Crash Course for B</TabTitle></BrowserTab>
        <BrowserTab $line><YouTube /><TabTitle $ls={-0.2}>(455) Flutter Course for B</TabTitle></BrowserTab>
        <BrowserTab><ChatGpt /><TabTitle $ls={-0.05}>Java-MySQL Basics</TabTitle></BrowserTab>
        <BrowserTab $active>
          <PmaFav /><TabTitle $active $ls={-0.5}>localhost / 127.0.0.1 |</TabTitle>
          <CloseTab width="13" height="13" viewBox="0 0 13 13"><path d="M1 1l11 11M12 1L1 12" stroke="#fff" strokeWidth="2.200" /></CloseTab>
        </BrowserTab>
        <BrowserTab $line><YouTube /><TabTitle $ls={-0.3}>(455) XAMPP - Open loca</TabTitle></BrowserTab>
        <BrowserTab $line><Joomla /><TabTitle>How to delete a database</TabTitle></BrowserTab>
        <NewTab><svg width="19" height="19" viewBox="0 0 19 19"><path d="M9.500 0v19M0 9.500h19" stroke="#fff" strokeWidth="2.600" /></svg></NewTab>
        <WindowButtons>
          <svg width="16" height="16" viewBox="0 0 16 16" fill="none" stroke="#d8d8d8" strokeWidth="1.100"><path d="M.5 3L8 11.500 15.500 3" /></svg>
          <svg width="16" height="16" viewBox="0 0 16 16"><path d="M.5 7.500h15" stroke="#e8e8e8" strokeWidth="1.300" /></svg>
          <svg width="16" height="16" viewBox="0 0 16 16" fill="none" stroke="#e8e8e8" strokeWidth="1.200"><rect x=".7" y="3.500" width="11.500" height="12" rx="2" /><path d="M3.500 1h8.500q3 0 3 3v8.500" /></svg>
          <svg width="16" height="16" viewBox="0 0 16 16"><path d="M.5.5l15 15M15.500.5l-15 15" stroke="#e8e8e8" strokeWidth="1.200" /></svg>
        </WindowButtons>
      </TabStrip>

      <Toolbar>
        <NavGroup>
          <svg width="17" height="21" viewBox="0 0 17 21"><path d="M15 1.500v18L2 10.500z" fill="none" stroke="#f0f0f4" strokeWidth="2" strokeLinejoin="round" /></svg>
          <svg width="17" height="21" viewBox="0 0 17 21"><path d="M2 1.500v18l13-9z" fill="none" stroke="#f0f0f4" strokeWidth="2" strokeLinejoin="round" /></svg>
          <svg width="22" height="21" viewBox="0 0 22 21"><path d="M16.500 4A9 9 0 1 0 18 14.500" fill="none" stroke="#f0f0f4" strokeWidth="2" strokeLinecap="round" /><path d="M13.500 2.500l7-1v7.500h-6z" fill="#f0f0f4" /></svg>
        </NavGroup>
        <Bookmark><svg width="17" height="21" viewBox="0 0 17 21"><path d="M1.500 1.200h14v18l-7-5-7 5z" fill="none" stroke="#f0f0f4" strokeWidth="2" strokeLinejoin="round" /></svg></Bookmark>
        <UrlBar>
          <svg width="20" height="20" viewBox="0 0 20 20"><circle cx="10" cy="10" r="10" fill="#9a9ca6" /><path d="M10 4v7.500M10 13.500v2.500" stroke="#191b22" strokeWidth="2.400" /></svg>
          <UrlText><b>localhost</b>/phpmyadmin/index.php?route=/server/databases</UrlText>
          <UrlActions>
            <svg width="23" height="22" viewBox="0 0 23 22" fill="none" stroke="#a4a5aa" strokeWidth="1.600" strokeLinejoin="round"><path d="M1 6v15h17v-4" /><path d="M14 1.500l8 6.500-8 6.500v-4c-4 0-7 1.500-9 5 .5-6 3-9.500 9-10z" /></svg>
            <Divider />
            <BraveLion s={28} w={24} />
            <Rewards>
              <svg width="28" height="24" viewBox="0 0 28 24"><path d="M14 0L0 24l14-8z" fill="#ff4724" /><path d="M14 0l14 24-14-8z" fill="#9e1f63" /><path d="M0 24h28l-14-9z" fill="#662d91" /><path d="M14 9.500L20 19H8z" fill="#fff" /></svg>
              <RewardsBadge>1</RewardsBadge>
            </Rewards>
          </UrlActions>
        </UrlBar>
        <ToolbarRight>
          <svg width="26" height="20" viewBox="0 0 26 20"><path d="M0 2h17M0 8.500h17M0 15h11" stroke="#f0f0f4" strokeWidth="2.400" /><path d="M20 16V1.500h5" fill="none" stroke="#f0f0f4" strokeWidth="2.600" /><circle cx="17.500" cy="16" r="3.600" fill="#f0f0f4" /></svg>
          <PanelIcon width="20" height="20" viewBox="0 0 21 20"><rect x="1" y="1" width="19" height="18" rx="1" fill="none" stroke="#f0f0f4" strokeWidth="2" /><path d="M1 1h6v18H1z" fill="#f0f0f4" /></PanelIcon>
          <WalletIcon width="25" height="21" viewBox="0 0 25 21" fill="none" stroke="#f0f0f4" strokeWidth="2"><path d="M22 6V4q0-2.800-3-2.800H4q-3 0-3 3V17q0 3 3 3h15q3 0 3-3v-1M1 5h21" /><path d="M24 6.500h-7a4.500 4.500 0 0 0 0 9h7z" /><path d="M16.500 11h3" strokeWidth="2.500" /></WalletIcon>
          <Vpn>VPN</Vpn>
          <svg width="15" height="20" viewBox="0 0 15 20"><path d="M0 1.500h15M0 10h15M0 18.500h15" stroke="#f0f0f4" strokeWidth="2" /></svg>
        </ToolbarRight>
      </Toolbar>

      <Page>
        <Sidebar>
          <LogoRow><Pma /></LogoRow>
          <ShortcutRow><Home /><Exit /><Help s={24} /><Docs /><Gear /><Refresh /></ShortcutRow>
          <NavButtons><NavButton>Recent</NavButton><NavButton>Favorites</NavButton></NavButtons>
          <TreeTools><CollapseAll /><Link /></TreeTools>
          <Tree>
            <TreeRow><Gutter $top="100%" $bottom="50%"><Dash $w={21} /></Gutter><NodeIcon><DbNew /></NodeIcon>New</TreeRow>
            <DbNode name="information_schema" />
            <DbNode name="mysql" />
            <DbNode name="performance_schema" />
            <DbNode name="phpmyadmin" />
            <DbNode name="shirish" open />
            <TreeRow><Gutter /><Gutter><Dash $w={21} /></Gutter><NodeIcon><TableNew /></NodeIcon>New</TreeRow>
            <TreeRow><Gutter /><Gutter $bottom="50%"><Toggle /><Dash $w={9} /></Gutter><NodeIcon><TableRel /></NodeIcon>sirish</TreeRow>
            <DbNode name="sujata" open />
            <DbNode name="test" last />
          </Tree>
        </Sidebar>

        <Main>
          <ServerBar>
            <BackBox><svg width="20" height="10" viewBox="0 0 20 10"><path d="M5.500.5L1 5l4.500 4.500M1 5h18" fill="none" stroke="#333" strokeWidth="1.200" /></svg></BackBox>
            <ServerIcon />
            <ServerName>Server: 127.0.0.1</ServerName>
            <svg width="18" height="16" viewBox="0 0 18 16"><path d="M.5 1.500h17M1.500 15L9 7l7.500 8" fill="none" stroke="#bbb" strokeWidth="3" /></svg>
          </ServerBar>
          <Menu>
            <MenuTab $w={168} $active><Db s={24} />Databases</MenuTab>
            {menu.map(([label, w, icon]) => <MenuTab key={label} $w={w}>{icon}{label}</MenuTab>)}
            <MenuTab $w={111} $pad={21}>
              <svg width="17" height="11" viewBox="0 0 17 11"><path d="M1 1h15L8.500 10z" fill="#888" stroke="#222" strokeWidth="1.500" /></svg>More
            </MenuTab>
          </Menu>
          <Content>
            <Title>Databases</Title>
            <CreateBox>
              <Legend><DbNew /><span>Create database</span><Help /></Legend>
              <CreateForm>
                <Field $h={43}>Database name</Field>
                <Select>utf8mb4_general_ci
                  <svg width="18" height="12" viewBox="0 0 18 12"><path d="M1.500 2L9 9.500 16.500 2" fill="none" stroke="#343a40" strokeWidth="2.500" strokeLinecap="round" strokeLinejoin="round" /></svg>
                </Select>
                <CreateButton>Create</CreateButton>
              </CreateForm>
            </CreateBox>
            <ActionRow>
              <CheckAll><Check $size={20} $edge="#bfc3c8" /><label>Check all</label></CheckAll>
              <DropButton><TableDrop />Drop</DropButton>
              <SearchAddon><Magnifier /></SearchAddon>
              <Field $h={44}>Search</Field>
            </ActionRow>
            <Table>
              <HeadRow>
                <HeadCell />
                <HeadCell>Database <SortArrow width="12" height="8" viewBox="0 0 12 8"><path d="M6 0l6 7.500H0z" fill="#999" /></SortArrow></HeadCell>
                <HeadCell>Collation</HeadCell>
                <HeadCell $dark>Action</HeadCell>
              </HeadRow>
              {rows.map(([name, collation, enabled], i) => (
                <Row key={name} $odd={i % 2 === 1}>
                  <CheckCell><Check $size={18} $edge={enabled ? "#767676" : "#cfcfcf"} $bg={enabled ? "#fff" : i % 2 ? "#ebebeb" : "#f8f8f8"} /></CheckCell>
                  <NameCell>{name}</NameCell>
                  <CollationCell>{collation}</CollationCell>
                  <ActionCell><Privileges />Check privileges</ActionCell>
                </Row>
              ))}
            </Table>
            <Total>Total: 7</Total>
            <ConsoleRow>
              <ConsoleTab><Terminal />Console</ConsoleTab>
              <ConsoleEdge />
            </ConsoleRow>
          </Content>
        </Main>

        <Scrollbar>
          <svg width="12" height="6" viewBox="0 0 12 6"><path d="M6 0l6 6H0z" fill="#a3a3a3" /></svg>
          <Thumb />
          <svg width="12" height="6" viewBox="0 0 12 6"><path d="M6 6l6-6H0z" fill="#505050" /></svg>
        </Scrollbar>
      </Page>

      <Taskbar>
        <Widget>
          <svg width="34" height="36" viewBox="0 0 34 36">
            <g stroke="#d97d0b" strokeWidth=".8"><path d="M1 4v5c0 3 20 3 20 0V4z" fill="#f59b1c" /><ellipse cx="11" cy="4" rx="10" ry="3" fill="#ffc23d" /><path d="M12 11v5c0 4 21 4 21 0v-5z" fill="#f59b1c" /><path d="M1 18v5c0 4 26 4 26 0v-5z" fill="#f59b1c" /><ellipse cx="14" cy="18" rx="13" ry="3.500" fill="#ffc23d" /></g>
            <path d="M10 27l3-1 4 3 4-3 3 1-7 9z" fill="#d9501e" />
          </svg>
          <WidgetBadge>1</WidgetBadge>
          <WidgetText>USDJPY<span>-0.82%</span></WidgetText>
        </Widget>
        <svg width="35" height="35" viewBox="0 0 35 35">
          <defs><linearGradient id="win" x1="0" y1="0" x2="1" y2="1"><stop offset="0" stopColor="#7fdcff" /><stop offset="1" stopColor="#0a93f8" /></linearGradient></defs>
          <path d="M0 1q0-1 1-1h15.700v16.700H0zM18.200 0H34q1 0 1 1v15.700H18.200zM0 18.200h16.700V35H1q-1 0-1-1zM18.200 18.200H35V34q0 1-1 1H18.200z" fill="url(#win)" />
        </svg>
        <SearchPill>
          <svg width="22" height="23" viewBox="0 0 22 23"><circle cx="9.500" cy="9.500" r="8.300" fill="#50646a" stroke="#e3e7e8" strokeWidth="2.200" /><path d="M15 16l6 6" stroke="#e3e7e8" strokeWidth="2.600" strokeLinecap="round" /></svg>
          <span>Search</span>
          <Bing />
        </SearchPill>
        <Apps>
          <AppSlot><TaskView /></AppSlot>
          <AppSlot><Chat /></AppSlot>
          <AppSlot $state="open"><Explorer /></AppSlot>
          <AppSlot><Edge /></AppSlot>
          <AppSlot><MAudio /></AppSlot>
          <AppSlot $state="open"><Messenger /></AppSlot>
          <AppSlot $state="open"><Instagram /></AppSlot>
          <AppSlot $state="active"><BraveLion s={36} w={30} c="#ff3c14" /></AppSlot>
          <AppSlot $state="open"><VsCode /></AppSlot>
          <AppSlot $state="open"><Xampp /></AppSlot>
        </Apps>
        <Tray>
          <TrayIcons>
            <Chevron width="17" height="10" viewBox="0 0 17 10"><path d="M1 9l7.500-7.500L16 9" fill="none" stroke="#fff" strokeWidth="2" /></Chevron>
            <Cloud width="24" height="22" viewBox="0 0 24 22">
              <path d="M5 17a5 5 0 0 1 0-9C7 1 17 0 19 7q3 2 2 8z" fill="#8c9790" /><path d="M5 18a5.500 5.500 0 0 1 1-11q4 0 6 3l4 8z" fill="#dfe3e1" />
              <circle cx="17.500" cy="15.500" r="6.500" fill="#fff" /><path d="M13.500 15a4 4 0 0 1 7-2M21.500 16a4 4 0 0 1-7 2" fill="none" stroke="#1976d2" strokeWidth="1.500" />
            </Cloud>
            <svg width="24" height="18" viewBox="0 0 24 18" fill="none" stroke="#fff" strokeWidth="2"><path d="M1 6.500a15.500 15.500 0 0 1 22 0M4.500 10a10.500 10.500 0 0 1 15 0M8 13.300a5.600 5.600 0 0 1 8 0" /><circle cx="12" cy="16" r="1.200" fill="#fff" /></svg>
            <svg width="24" height="20" viewBox="0 0 24 20" fill="none" strokeWidth="1.700"><path d="M1 7h4l5.500-5.500v17L5 13H1z" stroke="#fff" strokeLinejoin="round" /><path d="M13 7q2 3 0 6" stroke="#fff" /><path d="M16 4q4.500 6 0 12M19.500 1.500q6 8.500 0 17" stroke="#5c6f65" /></svg>
            <svg width="24" height="20" viewBox="0 0 24 20"><path d="M9 4h9q2.500 0 2.500 2.500v8Q20.500 18 18 18H4q-3 0-3-3v-4" fill="none" stroke="#fff" strokeWidth="1.800" /><path d="M9 6.500h9v9H4v-3z" fill="#fff" /><path d="M21 8.500h2.500v4H21z" fill="#fff" /><path d="M5 0L0 7h3L1.500 12 8 4.500H4.500L7 0z" fill="#fff" /></svg>
          </TrayIcons>
          <Clock>9:26 PM<br />6/8/2023</Clock>
          <Notice>3</Notice>
        </Tray>
      </Taskbar>
    </Screen>
  );
}
